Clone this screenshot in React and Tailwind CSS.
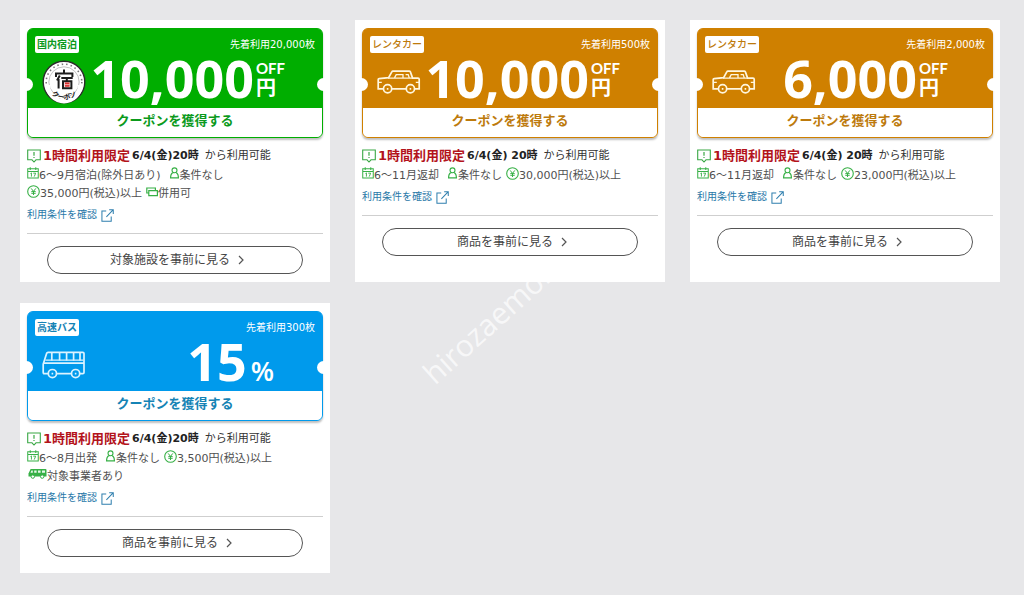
import { useState } from 'react';
import clsx from 'clsx';

const themes = {
  green: { bg: 'bg-[#00ae00]', border: 'border-[#00ae00]', text: 'text-[#0b9a1c]' },
  orange: { bg: 'bg-[#cf8000]', border: 'border-[#cf8000]', text: 'text-[#bd7a0c]' },
  blue: { bg: 'bg-[#009aec]', border: 'border-[#009aec]', text: 'text-[#1583b5]' }
};

const coupons = [
  {
    id: 1,
    theme: 'green',
    category: '国内宿泊',
    strong: true,
    limit: '先着利用20,000枚',
    icon: 'stamp',
    amount: '10,000',
    unit: 'yen',
    offset: 'pr-[30px]',
    start: '6/4(金)20時',
    details: [
      [
        { icon: 'calendar', text: '6～9月宿泊(除外日あり)' },
        { icon: 'person', text: '条件なし', className: 'ml-2' }
      ],
      [
        { icon: 'yen', text: '35,000円(税込)以上' },
        { icon: 'tickets', text: '併用可', className: 'ml-1' }
      ]
    ],
    button: '対象施設を事前に見る',
    bottom: 'pb-2'
  },
  {
    id: 2,
    theme: 'orange',
    category: 'レンタカー',
    limit: '先着利用500枚',
    icon: 'car',
    amount: '10,000',
    unit: 'yen',
    offset: 'pr-[30px]',
    start: '6/4(金) 20時',
    details: [
      [
        { icon: 'calendar', text: '6～11月返却' },
        { icon: 'person', text: '条件なし', className: 'ml-2' },
        { icon: 'yen', text: '30,000円(税込)以上', className: 'ml-1' }
      ]
    ],
    button: '商品を事前に見る',
    bottom: 'pb-2'
  },
  {
    id: 3,
    theme: 'orange',
    category: 'レンタカー',
    limit: '先着利用2,000枚',
    icon: 'car',
    amount: '6,000',
    unit: 'yen',
    offset: 'pr-[37px]',
    start: '6/4(金) 20時',
    details: [
      [
        { icon: 'calendar', text: '6～11月返却' },
        { icon: 'person', text: '条件なし', className: 'ml-2' },
        { icon: 'yen', text: '23,000円(税込)以上', className: 'ml-1' }
      ]
    ],
    button: '商品を事前に見る',
    bottom: 'pb-2'
  },
  {
    id: 4,
    theme: 'blue',
    category: '高速バス',
    strong: true,
    limit: '先着利用300枚',
    icon: 'bus',
    amount: '15',
    unit: 'percent',
    offset: 'pr-[41px]',
    start: '6/4(金)20時',
    details: [
      [
        { icon: 'calendar', text: '6～8月出発' },
        { icon: 'person', text: '条件なし', className: 'ml-2' },
        { icon: 'yen', text: '3,500円(税込)以上', className: 'ml-1' }
      ],
      [{ icon: 'minibus', text: '対象事業者あり' }]
    ],
    button: '商品を事前に見る',
    bottom: 'pb-4'
  }
];

function StampIcon() {
  return (
    <svg viewBox="0 0 44 44" className="h-11 w-11 shrink-0" aria-hidden="true">
      <defs>
        <path id="stamp-arc" d="M4.4 22 A17.6 17.6 0 0 0 39.6 22" />
      </defs>
      <circle cx="22" cy="22" r="20.8" fill="#fff" stroke="#2b2b2b" strokeWidth="1.4" />
      <circle cx="22" cy="22" r="17.8" fill="none" stroke="#777" strokeWidth="1.6" strokeDasharray="1.5 3" />
      <circle cx="22" cy="22" r="15.2" fill="#fff" stroke="#999" strokeWidth="0.6" />
      <path d="M3.5 25 A18.5 18.5 0 0 0 40.5 25 L36 25 A14 14 0 0 1 8 25 Z" fill="#fff" />
      {/* inn mark */}
      <g fill="none" stroke="#1d1d1d" strokeWidth="2">
        <path d="M22 9.5v3.5M14 17v-3.6h16.4V17" />
        <path d="M17.8 15.5l-2.8 5M16.6 19v9.5" />
        <path d="M19.3 18h11.4M24.8 18v3M21 21.2h8.4v7H21z" />
      </g>
      <rect x="22.8" y="22.4" width="4.8" height="4.4" fill="#d93030" />
      <path d="M22.8 24.6h4.8" stroke="#fff" strokeWidth="0.6" />
      <text fontSize="7" fontWeight="700" fill="#1d1d1d" textAnchor="middle">
        <textPath href="#stamp-arc" startOffset="50%">クーポン</textPath>
      </text>
    </svg>
  );
}

function CarIcon() {
  return (
    <svg viewBox="0 0 44 24" className="h-6 w-11 shrink-0" fill="none" stroke="#fff6df" strokeWidth="1.7" aria-hidden="true">
      <path d="M6.4 18.8H1.2V9.6q0-.8 1-.9l9.4-1 3.2-5.8q.4-.8 1.2-.8h16.2q.8 0 1.2.8l2.2 6.2h5.4q1.2 0 1.2 1.2v9.5h-4.6M14.8 18.8h14.4" />
      <path d="M11 8.1h24M26 7.6V4.6h-6.8l-1.6 3M28.6 4.6h2.6l1 3M1.4 12.4h3.4M38.8 12.4h3.2" strokeWidth="1.3" />
      <circle cx="10.6" cy="18.8" r="4.1" />
      <circle cx="33.4" cy="18.8" r="4.1" />
      <path d="M9.8 18.8h1.6M32.6 18.8h1.6" />
    </svg>
  );
}

function BusIcon() {
  return (
    <svg viewBox="0 0 44 28" className="h-7 w-11 shrink-0" fill="none" stroke="#dcf3ff" strokeWidth="1.7" aria-hidden="true">
      <path d="M6.2 22.6h-4q-1 0-1-1v-8.4L4.6 2.4q.3-1 1.4-1h34.8q1.2 0 1.2 1.2v18.8q0 1.2-1.2 1.2h-3M14.6 22.6h14.8" />
      <path d="M2 12.2h40M9.8 1.6v8M17.6 1.6v8M24.6 1.6v8M31.6 1.6v8M38 1.6v8" />
      <path d="M3.4 9.2h38" strokeWidth="1.2" />
      <circle cx="10.4" cy="22.6" r="4.1" />
      <circle cx="33.6" cy="22.6" r="4.1" />
      <path d="M9.6 22.6h1.6M32.8 22.6h1.6" />
    </svg>
  );
}

function NoticeIcon() {
  return (
    <svg viewBox="0 0 14 14" className="h-3.5 w-3.5 shrink-0" fill="none" stroke="#3aa845" aria-hidden="true">
      <path d="M.7 1h12.6v9.8H9L7 13l-2-2.2H.7z" strokeWidth="1.1" />
      <path d="M7 3v3.8M7 7.9v1.2" strokeWidth="1.2" />
    </svg>
  );
}

function DetailIcon({ name }) {
  if (name === 'calendar') {
    return (
      <svg viewBox="0 0 13 13" className="h-3 w-3" fill="none" stroke="#37b046" aria-hidden="true">
        <path d="M.8 2h11.4v10H.8zM.8 4.8h11.4M3.5.4v2.8M9.5.4v2.8" strokeWidth="1.1" />
        <path d="M3.8 7l1-.6v4M6.8 6.7h2.6L7.8 10.4" />
      </svg>
    );
  }
  if (name === 'person') {
    return (
      <svg viewBox="0 0 11 13" className="h-3 w-[11px]" fill="none" stroke="#37b046" strokeWidth="1.2" aria-hidden="true">
        <circle cx="5.5" cy="3.6" r="2.7" />
        <path d="M3.6 6Q1.2 7.6 1.2 11.8h8.6Q9.8 7.6 7.4 6" />
      </svg>
    );
  }
  if (name === 'yen') {
    return (
      <svg viewBox="0 0 13 13" className="h-[13px] w-[13px]" fill="none" stroke="#37b046" aria-hidden="true">
        <circle cx="6.5" cy="6.5" r="5.8" strokeWidth="1.1" />
        <path d="M4.2 3.4l2.3 3 2.3-3M6.5 6.4v3.6M4.3 6.6h4.4M4.3 8.3h4.4" />
      </svg>
    );
  }
  if (name === 'tickets') {
    return (
      <svg viewBox="0 0 12 10" className="mt-0.5 h-2.5 w-3" fill="none" stroke="#37b046" strokeWidth="1.2" aria-hidden="true">
        <path d="M2.8 6H.8V1h8.6v2M2.8 3.6h8.6v5H2.8z" />
      </svg>
    );
  }
  return (
    <svg viewBox="0 0 19 11" className="ml-px h-[11px] w-[19px]" aria-hidden="true">
      <path d="M2.6 1h15q.9 0 .9.9v6.6H.5V5.6z" fill="#37b046" />
      <path d="M3.4 2.4h1.4v2.4H2.5zM6.2 2.4h2.4v2.4H6.2zM10 2.4h2.6v2.4H10zM14 2.4h3v2.4h-3z" fill="#e6f7e8" />
      <circle cx="4.8" cy="8.6" r="1.7" fill="#fff" stroke="#37b046" />
      <circle cx="14.2" cy="8.6" r="1.7" fill="#fff" stroke="#37b046" />
    </svg>
  );
}

function ExternalIcon() {
  return (
    <svg viewBox="0 0 14 14" className="ml-1 h-[13px] w-[13px]" fill="none" stroke="#2f7fae" strokeWidth="1.1" aria-hidden="true">
      <path d="M5.6 2.2H1v11h10V8.2M5.8 8.4 13 1M8.8.8h4.4v4.6" />
    </svg>
  );
}

function Amount({ amount, unit, offset }) {
  if (unit === 'percent') {
    return (
      <p className={clsx("flex items-baseline font-['Open_Sans'] leading-[50px] text-white", offset)}>
        <span className="text-[52px] font-bold">{amount}</span>
        <span className="ml-1 text-[27px] font-semibold">%</span>
      </p>
    );
  }

  return (
    <p className={clsx('flex items-center text-white', offset)}>
      <span className="font-['Open_Sans'] text-[52px] leading-[50px] font-bold">{amount}</span>
      <span className="ml-0.5 flex flex-col pt-1 font-bold">
        <span className="font-[Lato] text-[15px] leading-4">OFF</span>
        <span className="text-xl leading-6">円</span>
      </span>
    </p>
  );
}

function Ticket({ coupon, acquired, onAcquire }) {
  const theme = themes[coupon.theme];

  return (
    <div className={clsx('relative rounded-md border shadow-[0_2px_2px_rgba(0,0,0,0.25)]', theme.border)}>
      <div className={clsx('flex h-[79px] flex-col rounded-t-sm px-[7px] pt-[7px]', theme.bg)}>
        <div className="flex h-[17px] items-center justify-between">
          <span
            className={clsx(
              'rounded-xs bg-white px-0.5 text-[10px] leading-[17px]',
              coupon.strong ? 'font-bold' : 'font-medium',
              theme.text
            )}
          >
            {coupon.category}
          </span>
          <span className="text-[10px] leading-[17px] text-white">{coupon.limit}</span>
        </div>
        <div className="flex h-[54px] items-start justify-between pl-[7px]">
          <span className="flex h-full items-center pt-1">
            {coupon.icon === 'stamp' && <StampIcon />}
            {coupon.icon === 'car' && <CarIcon />}
            {coupon.icon === 'bus' && <BusIcon />}
          </span>
          <Amount amount={coupon.amount} unit={coupon.unit} offset={coupon.offset} />
        </div>
      </div>
      <button
        type="button"
        onClick={onAcquire}
        aria-pressed={acquired}
        className={clsx('block h-[29px] w-full rounded-b-md bg-white pb-1 text-[13px] font-bold', theme.text)}
      >
        クーポンを獲得する
      </button>
      <span className="absolute top-[49px] -left-2 h-[13px] w-[13px] rounded-full bg-white" />
      <span className="absolute top-[49px] -right-2 h-[13px] w-[13px] rounded-full bg-white" />
    </div>
  );
}

function CouponCard({ coupon }) {
  const [acquired, setAcquired] = useState(false);

  return (
    <article className={clsx('bg-white px-[7px] pt-2', coupon.bottom)}>
      <Ticket coupon={coupon} acquired={acquired} onAcquire={() => setAcquired(!acquired)} />

      <p className="mt-2 flex items-center text-[11px] leading-5 whitespace-nowrap text-[#333]">
        <NoticeIcon />
        <strong className="ml-0.5 text-[13px] text-[#b3131b]">1時間利用限定</strong>
        <strong className="ml-0.5 text-[#222]">{coupon.start}</strong>
        <span className="ml-1.5">から利用可能</span>
      </p>

      <div className="mt-px text-[11px] leading-[18px] whitespace-nowrap text-[#505050]">
        {coupon.details.map((row, i) => (
          <div key={i} className="flex">
            {row.map((item) => (
              <span key={item.text} className={clsx('flex items-start', item.className)}>
                <DetailIcon name={item.icon} />
                <span>{item.text}</span>
              </span>
            ))}
          </div>
        ))}
      </div>

      <a href="#terms" className="mt-0.5 flex items-center text-[10px] leading-5 text-[#2878a8]">
        利用条件を確認
        <ExternalIcon />
      </a>

      <hr className="mt-2 border-[#cfcfcf]" />

      <a
        href="#items"
        className="mx-5 mt-3 flex h-7 items-center justify-center rounded-full border border-[#555] pl-1 text-xs text-[#444]"
      >
        {coupon.button}
        <svg viewBox="0 0 6 10" className="ml-2 h-2.5 w-1.5" fill="none" stroke="#555" strokeWidth="1.2" aria-hidden="true">
          <path d="M1 1l4 4-4 4" />
        </svg>
      </a>
    </article>
  );
}

export default function App() {
  return (
    <main className="relative min-h-screen overflow-hidden bg-[#e7e7e9] font-['DejaVu_Sans','Noto_Sans_CJK_JP',sans-serif]">
      <div className="grid grid-cols-3 items-stretch gap-x-[25px] gap-y-[21px] py-5 pr-6 pl-5">
        {coupons.map((coupon) => (
          <CouponCard key={coupon.id} coupon={coupon} />
        ))}
      </div>

      {/* Watermark */}
      <span className="pointer-events-none absolute top-[360px] left-[437px] origin-bottom-left -rotate-42 font-['Open_Sans'] text-[30px] leading-7 text-white/70">
        hirozaemon
      </span>
    </main>
  );
}
